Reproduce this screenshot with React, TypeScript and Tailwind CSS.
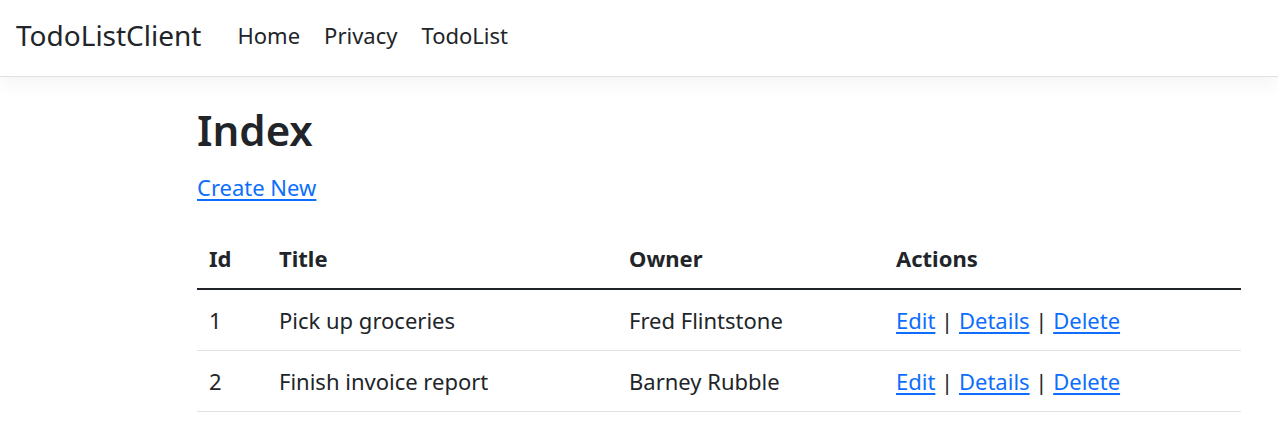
const rows = [
  { id: 1, title: "Pick up groceries", owner: "Fred Flintstone" },
  { id: 2, title: "Finish invoice report", owner: "Barney Rubble" },
];

function Actions() {
  return (
    <span>
      <a href="#" className="text-[#0d6efd] underline underline-offset-[3px]">Edit</a>
      {" | "}
      <a href="#" className="text-[#0d6efd] underline underline-offset-[3px]">Details</a>
      {" | "}
      <a href="#" className="text-[#0d6efd] underline underline-offset-[3px]">Delete</a>
    </span>
  );
}

export default function App() {
  return (
    <div className="min-h-[447px] bg-white text-[#212529] font-['Noto_Sans',sans-serif] text-[22px] leading-[36px]">
      <header className="h-[77px] border-b border-[#dee2e6] shadow-[0_6px_18px_rgba(0,0,0,0.05)] flex items-center px-4 pb-[6px]">
        <a href="#" className="text-[28px] mr-6">TodoListClient</a>
        <nav className="flex">
          <a href="#" className="px-3">Home</a>
          <a href="#" className="px-3">Privacy</a>
          <a href="#" className="px-3">TodoList</a>
        </nav>
      </header>

      <main className="pl-[197px] pt-[25px]">
        <h1 className="text-[42px] font-semibold leading-[55px] mb-3">Index</h1>
        <p className="mb-[23px]">
          <a href="#" className="text-[#0d6efd] underline underline-offset-[3px]">Create New</a>
        </p>
        <table className="w-[1044px] border-collapse text-left">
          <thead>
            <tr className="border-b-2 border-[#212529]">
              <th className="w-[70px] px-3 py-3 font-bold">Id</th>
              <th className="w-[350px] px-3 py-3 font-bold">Title</th>
              <th className="w-[267px] px-3 py-3 font-bold">Owner</th>
              <th className="px-3 py-3 font-bold">Actions</th>
            </tr>
          </thead>
          <tbody>
            {rows.map((r) => (
              <tr key={r.id} className="border-b border-[#dee2e6]">
                <td className="px-3 py-3">{r.id}</td>
                <td className="px-3 py-3">{r.title}</td>
                <td className="px-3 py-3">{r.owner}</td>
                <td className="px-3 py-3"><Actions /></td>
              </tr>
            ))}
          </tbody>
        </table>
      </main>
    </div>
  );
}
